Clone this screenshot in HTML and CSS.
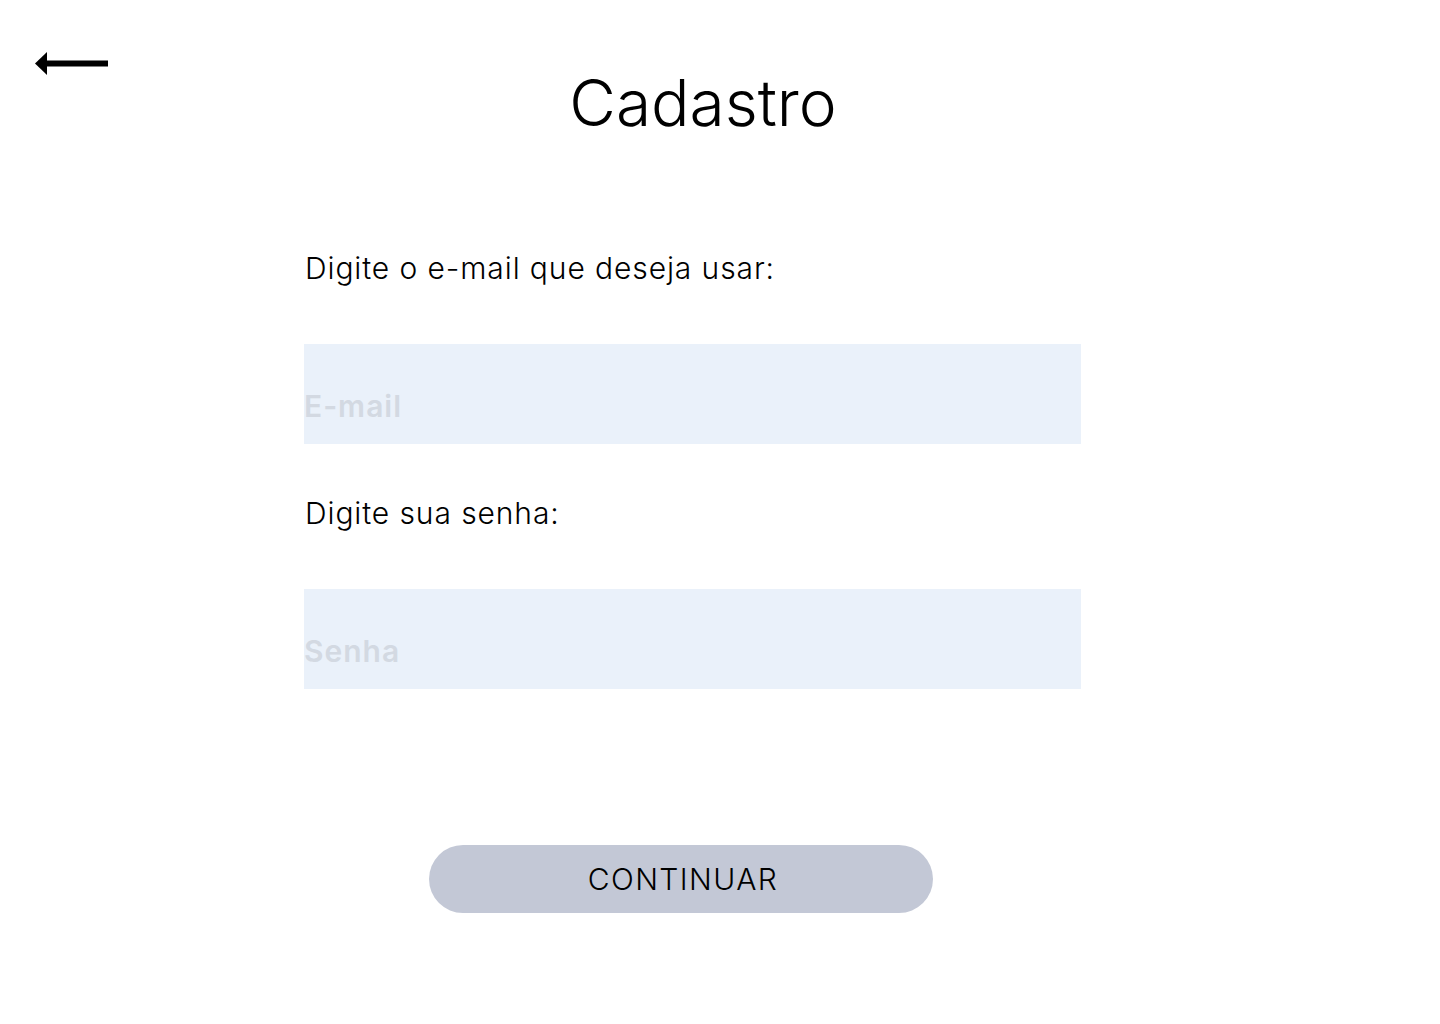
FILE: index.html
```html
<!DOCTYPE html>
<html lang="pt-BR">
<head>
<meta charset="utf-8">
<title>Cadastro</title>
<link rel="stylesheet" href="styles.css">
</head>
<body>
  <header class="header">
    <a class="back" href="#" aria-label="Voltar">
      <svg width="73" height="27" viewBox="0 0 73 27" aria-hidden="true">
        <polygon points="0,13.5 12,2 12,25" fill="#000"/>
        <rect x="10" y="10.5" width="63" height="6" fill="#000"/>
      </svg>
    </a>
    <h1 class="title">Cadastro</h1>
  </header>
  <main class="form">
    <label class="label" for="email">Digite o e-mail que deseja usar:</label>
    <input class="field" id="email" type="email" placeholder="E-mail">
    <label class="label label-second" for="senha">Digite sua senha:</label>
    <input class="field" id="senha" type="password" placeholder="Senha">
    <button class="btn" type="button">CONTINUAR</button>
  </main>
</body>
</html>
```
FILE: styles.css
```css
* { box-sizing: border-box; }
html, body { margin: 0; padding: 0; background: #fff; }
body {
  font-family: Inter, "Noto Sans", "Liberation Sans", sans-serif;
  color: #000;
  width: 1440px;
  min-height: 1024px;
}
.header {
  display: flex;
  align-items: flex-start;
  padding: 50px 142px 0 35px;
}
.back {
  display: block;
  width: 73px;
  height: 27px;
}
.back svg { display: block; }
.title {
  flex: 1;
  margin: 15px 0 0;
  text-align: center;
  font-size: 64px;
  line-height: 76px;
  font-weight: 300;
}
.form {
  display: flex;
  flex-direction: column;
  align-items: flex-start;
  width: 777px;
  margin-left: 304px;
  padding-top: 109px;
}
.label {
  display: block;
  font-size: 30px;
  line-height: 36px;
  font-weight: 300;
  letter-spacing: 0.9px;
  margin-left: 1px;
  margin-bottom: 58px;
}
.label-second { margin-top: 51px; }
.field {
  display: block;
  flex: none;
  width: 777px;
  height: 100px;
  border: 0;
  outline: 0;
  margin: 0;
  padding: 44px 0 20px 0;
  background: #EAF1FA;
  font-family: inherit;
  font-size: 30px;
  line-height: 36px;
  font-weight: 600;
  letter-spacing: 1px;
  color: #333;
}
.field::placeholder { color: #D3D9E2; opacity: 1; }
.btn {
  flex: none;
  margin: 156px 0 0 125px;
  width: 504px;
  height: 68px;
  border: 0;
  border-radius: 34px;
  background: #C3C8D6;
  font-family: inherit;
  font-size: 30px;
  font-weight: 300;
  color: #000;
  letter-spacing: 1.4px;
  padding: 0 0 0 4px;
  cursor: pointer;
}
```
